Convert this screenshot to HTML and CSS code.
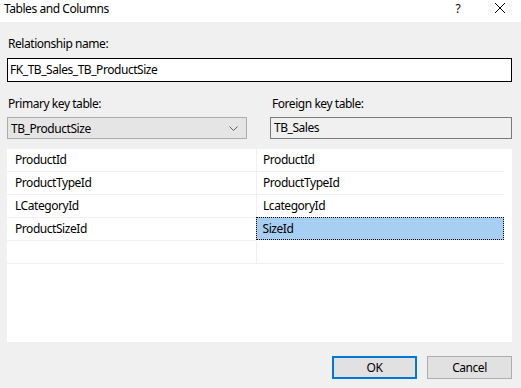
FILE: index.html
```html
<!DOCTYPE html>
<html lang="en">
<head>
    <meta charset="UTF-8">
    <title>Tables and Columns</title>
    <link rel="stylesheet" href="styles.css">
</head>
<body>

<div class="dialog">
    <div class="titlebar">
        <span class="title">Tables and Columns</span>
        <span class="help">?</span>
        <span class="close">
            <svg width="12" height="12" viewBox="0 0 12 12"><path d="M1 1 L11 11 M11 1 L1 11" stroke="#000" stroke-width="1" fill="none"/></svg>
        </span>
    </div>

    <div class="content">
        <div class="label first">Relationship name:</div>
        <div class="textbox">FK_TB_Sales_TB_ProductSize</div>

        <div class="keys">
            <div class="key-col">
                <div class="label">Primary key table:</div>
                <div class="combo">
                    <span>TB_ProductSize</span>
                    <svg width="9" height="5" viewBox="0 0 9 5"><path d="M0.5 0.5 L4.5 4.5 L8.5 0.5" stroke="#606060" stroke-width="1" fill="none"/></svg>
                </div>
            </div>
            <div class="key-col right">
                <div class="label">Foreign key table:</div>
                <div class="readonly">TB_Sales</div>
            </div>
        </div>

        <div class="grid">
            <div class="row"><div class="cell">ProductId</div><div class="cell">ProductId</div></div>
            <div class="row"><div class="cell">ProductTypeId</div><div class="cell">ProductTypeId</div></div>
            <div class="row"><div class="cell">LCategoryId</div><div class="cell">LcategoryId</div></div>
            <div class="row"><div class="cell">ProductSizeId</div><div class="cell selected">SizeId</div></div>
            <div class="row"><div class="cell"></div><div class="cell"></div></div>
        </div>

        <div class="buttons">
            <button class="btn default">OK</button>
            <button class="btn">Cancel</button>
        </div>
    </div>
</div>

</body>
</html>
```

FILE: styles.css
```css
body {
    margin: 0;
    font-family: 'Noto Sans', 'Liberation Sans', sans-serif;
    font-size: 12px;
    letter-spacing: -0.45px;
    color: #000;
    background: #f0f0f0;
}

.dialog {
    width: 521px;
    height: 388px;
    background: #f0f0f0;
    overflow: hidden;
}

.titlebar {
    height: 22px;
    background: #fff;
    display: flex;
    align-items: center;
    padding-left: 4px;
}

.title {
    flex: 1;
    margin-top: -6px;
}

.help {
    width: 20px;
    margin-right: 26px;
    margin-top: -6px;
    text-align: center;
}

.close {
    width: 12px;
    margin-right: 15px;
    margin-top: -6px;
    display: flex;
}

.content {
    padding: 0 9px 0 7px;
}

.label {
    height: 16px;
    line-height: 16px;
    padding-left: 1px;
}

.label.first {
    margin-top: 14px;
}

.textbox {
    margin-top: 6px;
    height: 22px;
    line-height: 21px;
    border: 1px solid #000;
    background: #fff;
    padding-left: 2px;
}

.keys {
    display: flex;
    justify-content: space-between;
    margin-top: 14px;
}

.key-col {
    width: 240px;
}

.key-col.right {
    width: 242px;
}

.key-col .label {
    margin-bottom: 5px;
}

.key-col.right .label {
    padding-left: 2px;
}

.combo {
    height: 20px;
    border: 1px solid #adadad;
    background: #e5e5e5;
    display: flex;
    align-items: center;
    justify-content: space-between;
    padding: 0 8px 0 3px;
}

.readonly {
    height: 20px;
    line-height: 20px;
    border: 1px solid #7a7a7a;
    background: #f0f0f0;
    padding-left: 3px;
}

.grid {
    margin-top: 10px;
    height: 193px;
    background: #fff;
    padding-right: 8px;
}

.row {
    display: flex;
    height: 23px;
}

.cell {
    flex: 1;
    height: 22px;
    line-height: 22px;
    padding-left: 8px;
    border-bottom: 1px solid #f0f0f0;
    box-sizing: content-box;
}

.cell + .cell {
    border-left: 1px solid #f0f0f0;
    padding-left: 6px;
}

.cell.selected {
    background: #a6cff2;
    border: 1px dotted #000;
    height: 21px;
    line-height: 21px;
    margin-top: -1px;
    padding-left: 6px;
}

.buttons {
    display: flex;
    justify-content: flex-end;
    gap: 10px;
    margin-top: 14px;
}

.btn {
    width: 85px;
    height: 23px;
    font-family: inherit;
    font-size: 12px;
    letter-spacing: -0.45px;
    background: #e1e1e1;
    border: 1px solid #adadad;
    padding: 0;
    color: #000;
}

.btn.default {
    border: 2px solid #0078d7;
}
```
